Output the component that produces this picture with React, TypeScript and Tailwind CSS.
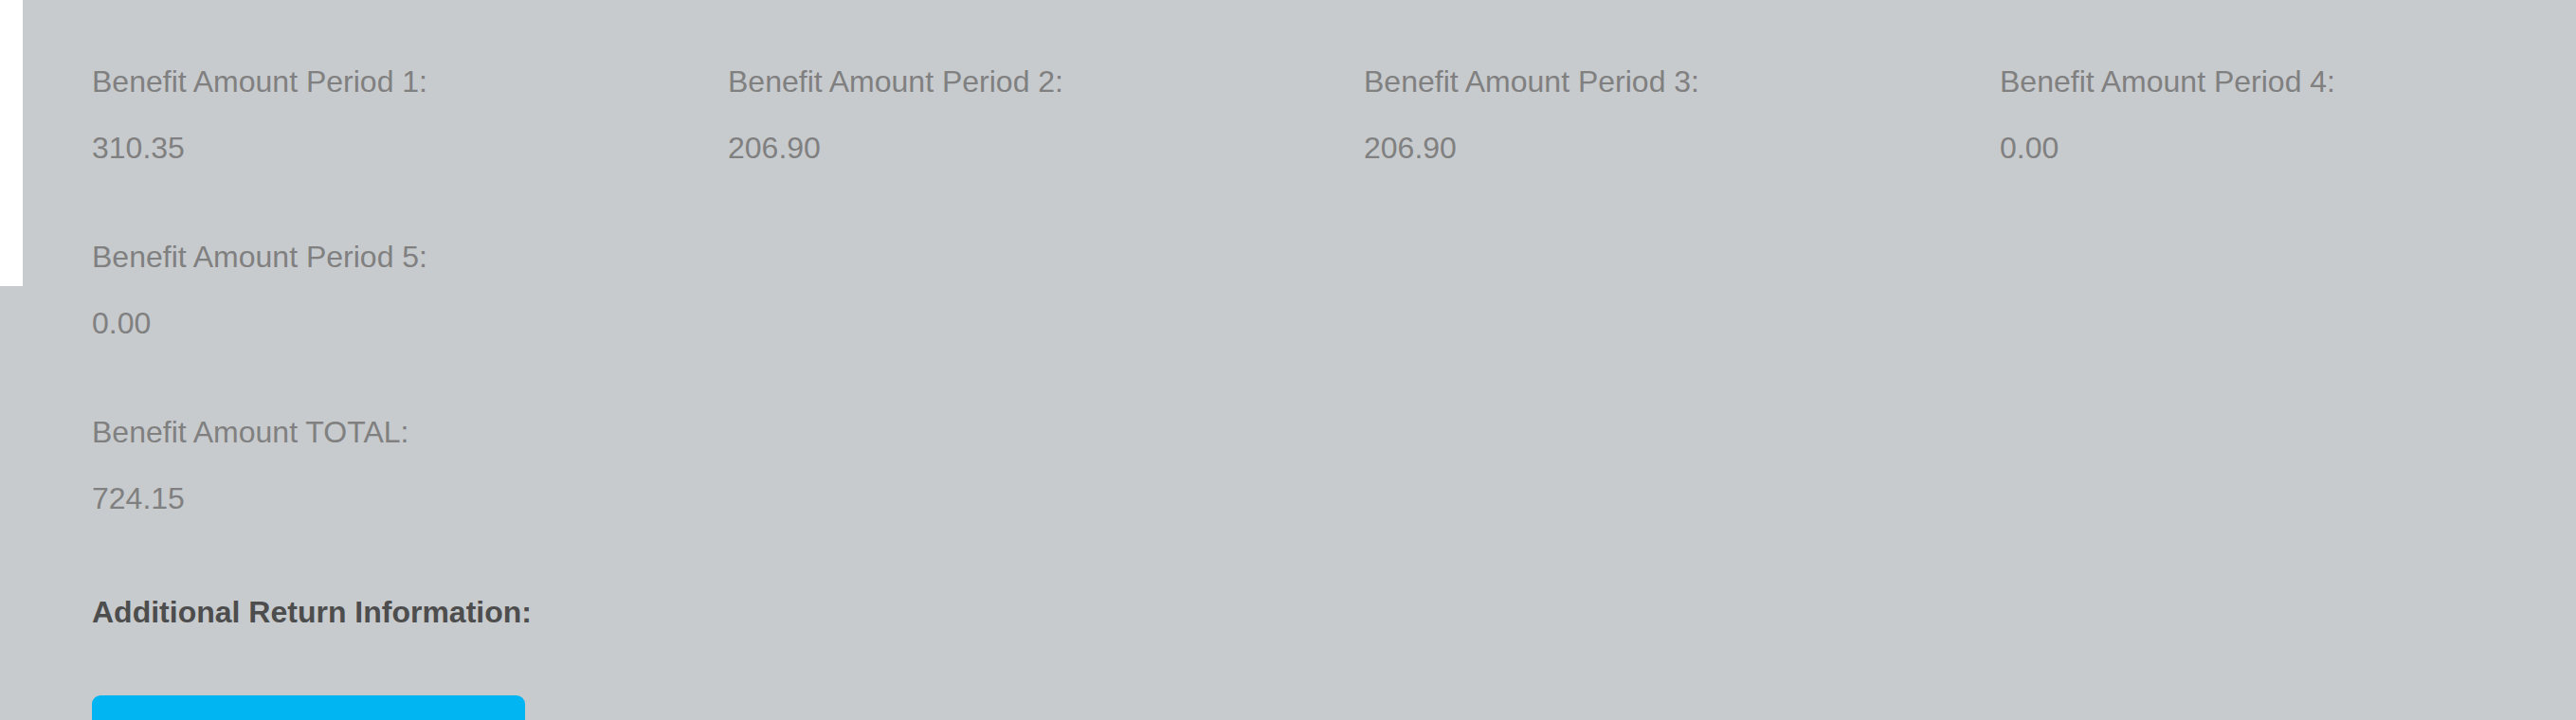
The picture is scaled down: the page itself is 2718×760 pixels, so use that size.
const periods = [
  { label: "Benefit Amount Period 1:", value: "310.35" },
  { label: "Benefit Amount Period 2:", value: "206.90" },
  { label: "Benefit Amount Period 3:", value: "206.90" },
  { label: "Benefit Amount Period 4:", value: "0.00" },
]

function Field({ label, value }: { label: string; value: string }) {
  return (
    <div className="flex flex-col">
      <div className="text-[32px] leading-[48px] text-[#808080]">{label}</div>
      <div className="mt-[22px] text-[32px] leading-[48px] text-[#808080]">{value}</div>
    </div>
  )
}

export default function App() {
  return (
    <div
      className="relative h-[760px] w-full overflow-hidden bg-[#c8cbce]"
      style={{ fontFamily: '"Liberation Sans", Arial, sans-serif' }}
    >
      {/* page behind the panel peeks out on the left */}
      <div className="absolute left-0 top-0 h-[302px] w-[24px] bg-white" />

      <div className="flex flex-col pl-[97px] pt-[62px]">
        <div className="grid grid-cols-[671px_671px_671px_1fr]">
          {periods.map((p) => (
            <Field key={p.label} label={p.label} value={p.value} />
          ))}
        </div>

        <div className="mt-[67px]">
          <Field label="Benefit Amount Period 5:" value="0.00" />
        </div>

        <div className="mt-[67px]">
          <Field label="Benefit Amount TOTAL:" value="724.15" />
        </div>

        <div className="mt-[72px] text-[32px] font-bold leading-[48px] text-[#4d4d4d]">
          Additional Return Information:
        </div>

        <button className="mt-[64px] h-[88px] w-[457px] rounded-[9px] bg-[#00b5f1]" />
      </div>
    </div>
  )
}
